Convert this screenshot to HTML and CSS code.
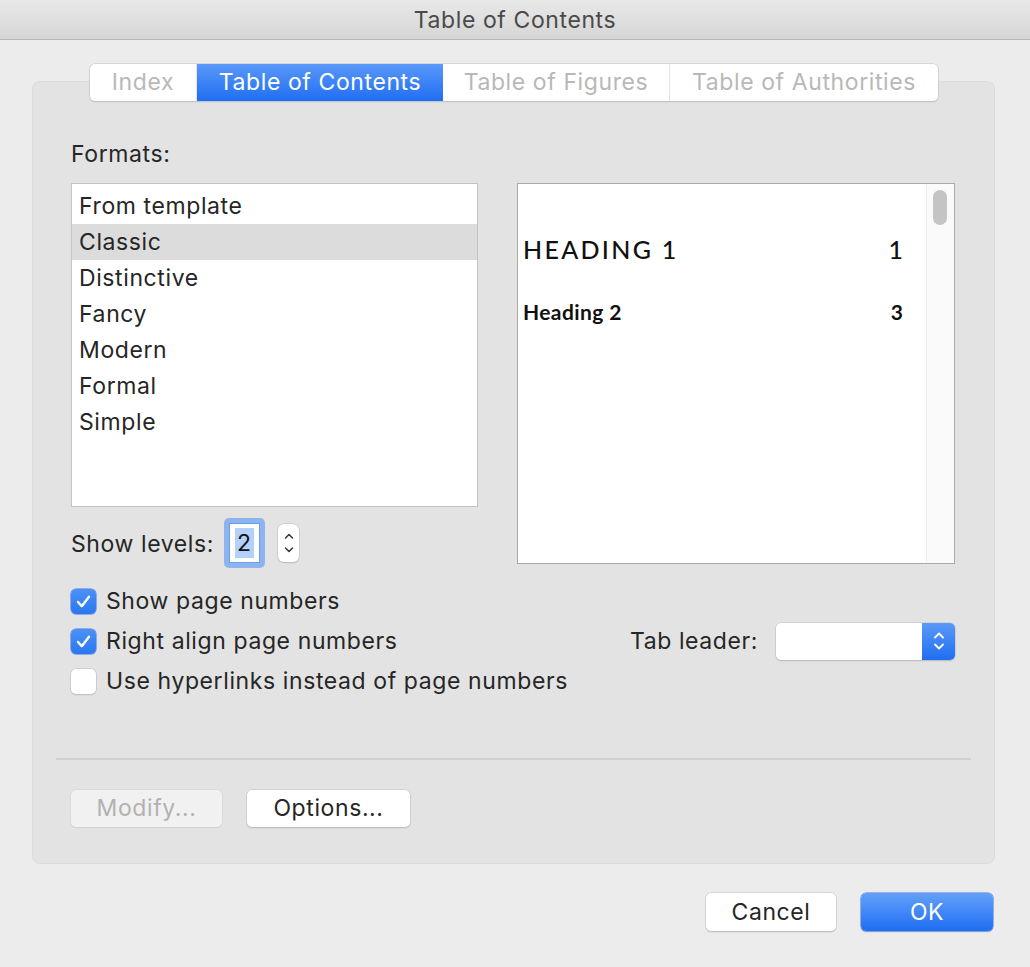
FILE: index.html
```html
<!DOCTYPE html>
<html>
<head>
<meta charset="utf-8">
<link rel="stylesheet" href="styles.css">
</head>
<body>
<div class="window">
  <div class="titlebar">Table of Contents</div>
  <div class="tabs-wrap">
    <div class="segmented">
      <div class="seg seg-index">Index</div>
      <div class="seg seg-active seg-toc">Table of Contents</div>
      <div class="seg seg-fig">Table of Figures</div>
      <div class="seg seg-auth">Table of Authorities</div>
    </div>
  </div>
  <div class="group">
    <div class="label formats-label">Formats:</div>
    <div class="top-row">
      <div class="left-col">
        <div class="listbox">
          <div class="list-item">From template</div>
          <div class="list-item selected">Classic</div>
          <div class="list-item">Distinctive</div>
          <div class="list-item">Fancy</div>
          <div class="list-item">Modern</div>
          <div class="list-item">Formal</div>
          <div class="list-item">Simple</div>
        </div>
        <div class="levels-row">
          <span class="label">Show levels:</span>
          <div class="focus-ring"><div class="num-field"><span class="sel">2</span></div></div>
          <div class="stepper">
            <svg width="12" height="30" viewBox="0 0 12 30"><path d="M2.5 10 L6 6.5 L9.5 10" fill="none" stroke="#3a3a3a" stroke-width="1.6" stroke-linecap="round" stroke-linejoin="round"/><path d="M2.5 20 L6 23.5 L9.5 20" fill="none" stroke="#3a3a3a" stroke-width="1.6" stroke-linecap="round" stroke-linejoin="round"/></svg>
          </div>
        </div>
      </div>
      <div class="preview">
        <div class="preview-body">
          <div class="pv-h1"><span>HEADING 1</span><span class="pv-num">1</span></div>
          <div class="pv-h2"><span>Heading 2</span><span class="pv-num">3</span></div>
        </div>
        <div class="scrolltrack"><div class="thumb"></div></div>
      </div>
    </div>
    <div class="checks">
      <div class="check-row">
        <div class="checkbox checked"><svg width="25" height="25" viewBox="0 0 25 25"><path d="M7 13 L10.8 17.2 L18 7.8" fill="none" stroke="#fff" stroke-width="2.4" stroke-linecap="round" stroke-linejoin="round"/></svg></div>
        <span class="label">Show page numbers</span>
      </div>
      <div class="check-row">
        <div class="checkbox checked"><svg width="25" height="25" viewBox="0 0 25 25"><path d="M7 13 L10.8 17.2 L18 7.8" fill="none" stroke="#fff" stroke-width="2.4" stroke-linecap="round" stroke-linejoin="round"/></svg></div>
        <span class="label">Right align page numbers</span>
        <div class="spacer"></div>
        <span class="label">Tab leader:</span>
        <div class="popup">
          <div class="popup-value"></div>
          <div class="popup-arrows">
            <svg width="14" height="28" viewBox="0 0 14 28"><path d="M3 10.5 L7 6.5 L11 10.5" fill="none" stroke="#fff" stroke-width="1.8" stroke-linecap="round" stroke-linejoin="round"/><path d="M3 17.5 L7 21.5 L11 17.5" fill="none" stroke="#fff" stroke-width="1.8" stroke-linecap="round" stroke-linejoin="round"/></svg>
          </div>
        </div>
      </div>
      <div class="check-row">
        <div class="checkbox"></div>
        <span class="label">Use hyperlinks instead of page numbers</span>
      </div>
    </div>
    <div class="separator"></div>
    <div class="group-buttons">
      <div class="btn btn-disabled btn-modify">Modify...</div>
      <div class="btn btn-options">Options...</div>
    </div>
  </div>
  <div class="footer">
    <div class="btn btn-cancel">Cancel</div>
    <div class="btn btn-primary btn-ok">OK</div>
  </div>
</div>
</body>
</html>
```

FILE: styles.css
```css
* { box-sizing: border-box; }
html, body {
  margin: 0;
  padding: 0;
}
body {
  background: #ececec;
  font-family: Inter, "Liberation Sans", sans-serif;
  font-size: 23px;
  letter-spacing: 0.6px;
  color: #262626;
  width: 1030px;
  height: 967px;
  overflow: hidden;
}
.window {
  width: 1030px;
  height: 967px;
  background: #ececec;
}
.titlebar {
  height: 40px;
  line-height: 40px;
  text-align: center;
  color: #4a4a4a;
  background: linear-gradient(#e9e9e9, #d5d5d5);
  border-bottom: 1px solid #b9b9b9;
}
.tabs-wrap {
  padding-top: 24px;
  padding-left: 90px;
  position: relative;
  z-index: 2;
}
.segmented {
  display: flex;
  width: 848px;
  height: 37px;
  background: #fff;
  border-radius: 5px;
  box-shadow: 0 0 0 0.5px #c4c4c4, 0 1px 1.5px rgba(0,0,0,0.18);
  overflow: hidden;
}
.seg {
  height: 37px;
  line-height: 37px;
  text-align: center;
  color: #b8b8b8;
  border-right: 1px solid #e4e4e4;
}
.seg:last-child { border-right: none; }
.seg-index { width: 107px; }
.seg-toc { width: 246px; }
.seg-fig { width: 227px; }
.seg-auth { width: 268px; }
.seg-active {
  color: #fff;
  background: linear-gradient(#5a98f9, #1f6ef2);
  border-right: none;
}
.group {
  margin: -19px 36px 0 33px;
  height: 781px;
  background: #e3e3e3;
  border-radius: 7px;
  box-shadow: 0 0 0 1px #dcdcdc;
  padding: 59px 39px 0 38px;
  position: relative;
  z-index: 1;
}
.label {
  color: #262626;
  white-space: nowrap;
}
.formats-label {
  height: 26px;
  line-height: 26px;
  margin-bottom: 16px;
}
.top-row {
  display: flex;
  gap: 39px;
}
.left-col {
  width: 407px;
}
.listbox {
  height: 324px;
  background: #fff;
  border: 1px solid #c3c3c3;
  padding-top: 4px;
}
.list-item {
  height: 36px;
  line-height: 36px;
  padding-left: 7px;
  color: #262626;
}
.list-item.selected {
  background: #dcdcdc;
}
.levels-row {
  margin-top: 11px;
  height: 50px;
  display: flex;
  align-items: center;
}
.levels-row .label {
  width: 153px;
  padding-top: 2px;
}
.focus-ring {
  width: 41px;
  height: 50px;
  border-radius: 5px;
  background: #8db4ee;
  padding: 5px;
}
.num-field {
  width: 31px;
  height: 40px;
  background: #fff;
  border: 1px solid #6e9fe6;
  display: flex;
  align-items: center;
  padding-left: 5px;
  letter-spacing: 0;
}
.sel {
  background: #b3d2fb;
  color: #111;
  line-height: 30px;
  padding: 0 3px 0 2px;
}
.stepper {
  margin-left: 13px;
  width: 21px;
  height: 38px;
  background: #fff;
  border-radius: 6px;
  box-shadow: 0 0 0 0.5px #c2c2c2, 0 1px 1.5px rgba(0,0,0,0.2);
  display: flex;
  align-items: center;
  justify-content: center;
}
.preview {
  width: 438px;
  height: 381px;
  background: #fff;
  border: 1px solid #a9a9a9;
  display: flex;
}
.preview-body {
  flex: 1;
  padding: 0 23px 0 5px;
  color: #111;
}
.pv-h1 {
  margin-top: 47px;
  height: 36px;
  line-height: 36px;
  display: flex;
  justify-content: space-between;
  font-family: Lato, "Open Sans", sans-serif;
  font-size: 25px;
  letter-spacing: 2.3px;
  font-weight: 500;
}
.pv-num { letter-spacing: 0; }
.pv-h2 {
  margin-top: 32px;
  height: 26px;
  line-height: 26px;
  display: flex;
  justify-content: space-between;
  font-family: Lato, "Open Sans", sans-serif;
  font-size: 21px;
  letter-spacing: 0.4px;
  font-weight: 700;
}
.scrolltrack {
  width: 28px;
  background: #fafafa;
  border-left: 1px solid #ececec;
  padding: 6px 0 0 6px;
}
.thumb {
  width: 14px;
  height: 35px;
  border-radius: 7px;
  background: #c4c4c4;
}
.checks {
  margin-top: 13px;
  display: flex;
  flex-direction: column;
}
.check-row {
  height: 40px;
  display: flex;
  align-items: center;
}
.checkbox {
  width: 25px;
  height: 25px;
  border-radius: 5px;
  background: #fff;
  box-shadow: 0 0 0 0.5px #bdbdbd, 0 1px 1.5px rgba(0,0,0,0.15);
  margin-right: 10px;
  flex: none;
}
.checkbox.checked {
  background: linear-gradient(#4c91f8, #2b77f2);
  box-shadow: 0 0 0 0.5px #3a78e0;
}
.checkbox svg { display: block; }
.spacer { flex: 1; }
.popup {
  margin-left: 18px;
  width: 179px;
  height: 37px;
  display: flex;
  border-radius: 5px;
  background: #fff;
  box-shadow: 0 0 0 0.5px #c2c2c2, 0 1px 1.5px rgba(0,0,0,0.2);
  overflow: hidden;
  flex: none;
}
.popup-value { flex: 1; }
.popup-arrows {
  width: 33px;
  background: linear-gradient(#5b99f9, #1f6ef2);
  display: flex;
  align-items: center;
  justify-content: center;
}
.separator {
  margin: 57px -16px 0 -15px;
  height: 2px;
  background: #d0d0d0;
}
.group-buttons {
  margin-top: 30px;
  display: flex;
  gap: 25px;
}
.btn {
  height: 37px;
  line-height: 37px;
  text-align: center;
  background: #fff;
  border-radius: 5px;
  box-shadow: 0 0 0 0.5px #c2c2c2, 0 1px 1.5px rgba(0,0,0,0.22);
  color: #262626;
}
.btn-modify { width: 151px; }
.btn-options { width: 163px; }
.btn-disabled {
  background: #f1f1f1;
  color: #b2b2b2;
  box-shadow: 0 0 0 0.5px #d2d2d2, 0 1px 1px rgba(0,0,0,0.08);
}
.footer {
  margin-top: 30px;
  padding-right: 37px;
  display: flex;
  justify-content: flex-end;
  gap: 25px;
}
.footer .btn { height: 38px; line-height: 38px; }
.btn-cancel { width: 130px; }
.btn-ok { width: 132px; }
.btn-primary {
  color: #fff;
  background: linear-gradient(#64a0fa, #1f6ef2);
  box-shadow: 0 0 0 0.5px #3f7fe6, 0 1px 1.5px rgba(0,0,0,0.2);
}
```
